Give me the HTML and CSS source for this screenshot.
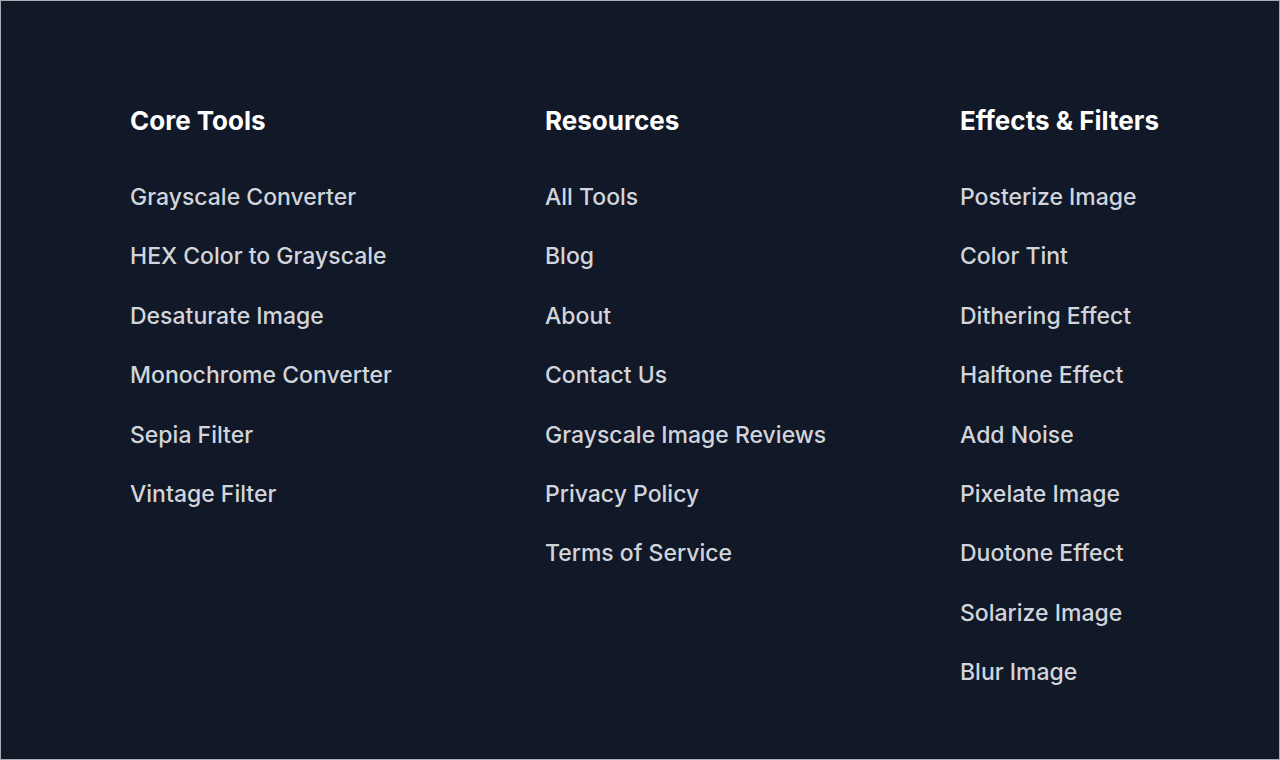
FILE: index.html
```html
<!DOCTYPE html>
<html lang="en">
  <head>
    <meta charset="UTF-8" />
    <meta name="viewport" content="width=device-width, initial-scale=1.0" />
    <title>Grayscale Image</title>
    <link rel="stylesheet" href="styles.css">
  </head>
  <body>
    <footer class="footer">
      <nav class="footer-column" aria-labelledby="core-tools">
        <h2 id="core-tools">Core Tools</h2>
        <ul>
          <li><a href="#">Grayscale Converter</a></li>
          <li><a href="#">HEX Color to Grayscale</a></li>
          <li><a href="#">Desaturate Image</a></li>
          <li><a href="#">Monochrome Converter</a></li>
          <li><a href="#">Sepia Filter</a></li>
          <li><a href="#">Vintage Filter</a></li>
        </ul>
      </nav>

      <nav class="footer-column" aria-labelledby="resources">
        <h2 id="resources">Resources</h2>
        <ul>
          <li><a href="#">All Tools</a></li>
          <li><a href="#">Blog</a></li>
          <li><a href="#">About</a></li>
          <li><a href="#">Contact Us</a></li>
          <li><a href="#">Grayscale Image Reviews</a></li>
          <li><a href="#">Privacy Policy</a></li>
          <li><a href="#">Terms of Service</a></li>
        </ul>
      </nav>

      <nav class="footer-column" aria-labelledby="effects">
        <h2 id="effects">Effects &amp; Filters</h2>
        <ul>
          <li><a href="#">Posterize Image</a></li>
          <li><a href="#">Color Tint</a></li>
          <li><a href="#">Dithering Effect</a></li>
          <li><a href="#">Halftone Effect</a></li>
          <li><a href="#">Add Noise</a></li>
          <li><a href="#">Pixelate Image</a></li>
          <li><a href="#">Duotone Effect</a></li>
          <li><a href="#">Solarize Image</a></li>
          <li><a href="#">Blur Image</a></li>
        </ul>
      </nav>
    </footer>
  </body>
</html>
```
FILE: styles.css
```css
* {
  box-sizing: border-box;
}

body {
  margin: 0;
  font-family: Inter, sans-serif;
  background-color: #111827;
}

/* one heading row, then nine link rows shared by all columns */
.footer {
  display: grid;
  grid-template-columns: repeat(3, 1fr);
  grid-template-rows: auto repeat(9, 1fr);
  column-gap: 96px;
  min-height: 100vh;
  padding: 102px 0 57px 129px;
  border: 1px solid #a9aeb4;
}

.footer-column {
  display: grid;
  grid-row: 1 / -1;
  grid-template-rows: subgrid;
}

.footer-column h2 {
  margin: 0 0 28px;
  font-size: 26px;
  line-height: 36px;
  font-weight: 700;
  color: #fff;
}

.footer-column ul {
  display: grid;
  grid-row: 2 / -1;
  grid-template-rows: subgrid;
  align-items: center;
  margin: 0;
  padding: 0;
  list-style: none;
}

.footer-column a {
  font-size: 23px;
  line-height: 36px;
  font-weight: 500;
  color: #d1d5db;
  text-decoration: none;
  white-space: nowrap;
}

.footer-column a:hover {
  color: #fff;
}
```
